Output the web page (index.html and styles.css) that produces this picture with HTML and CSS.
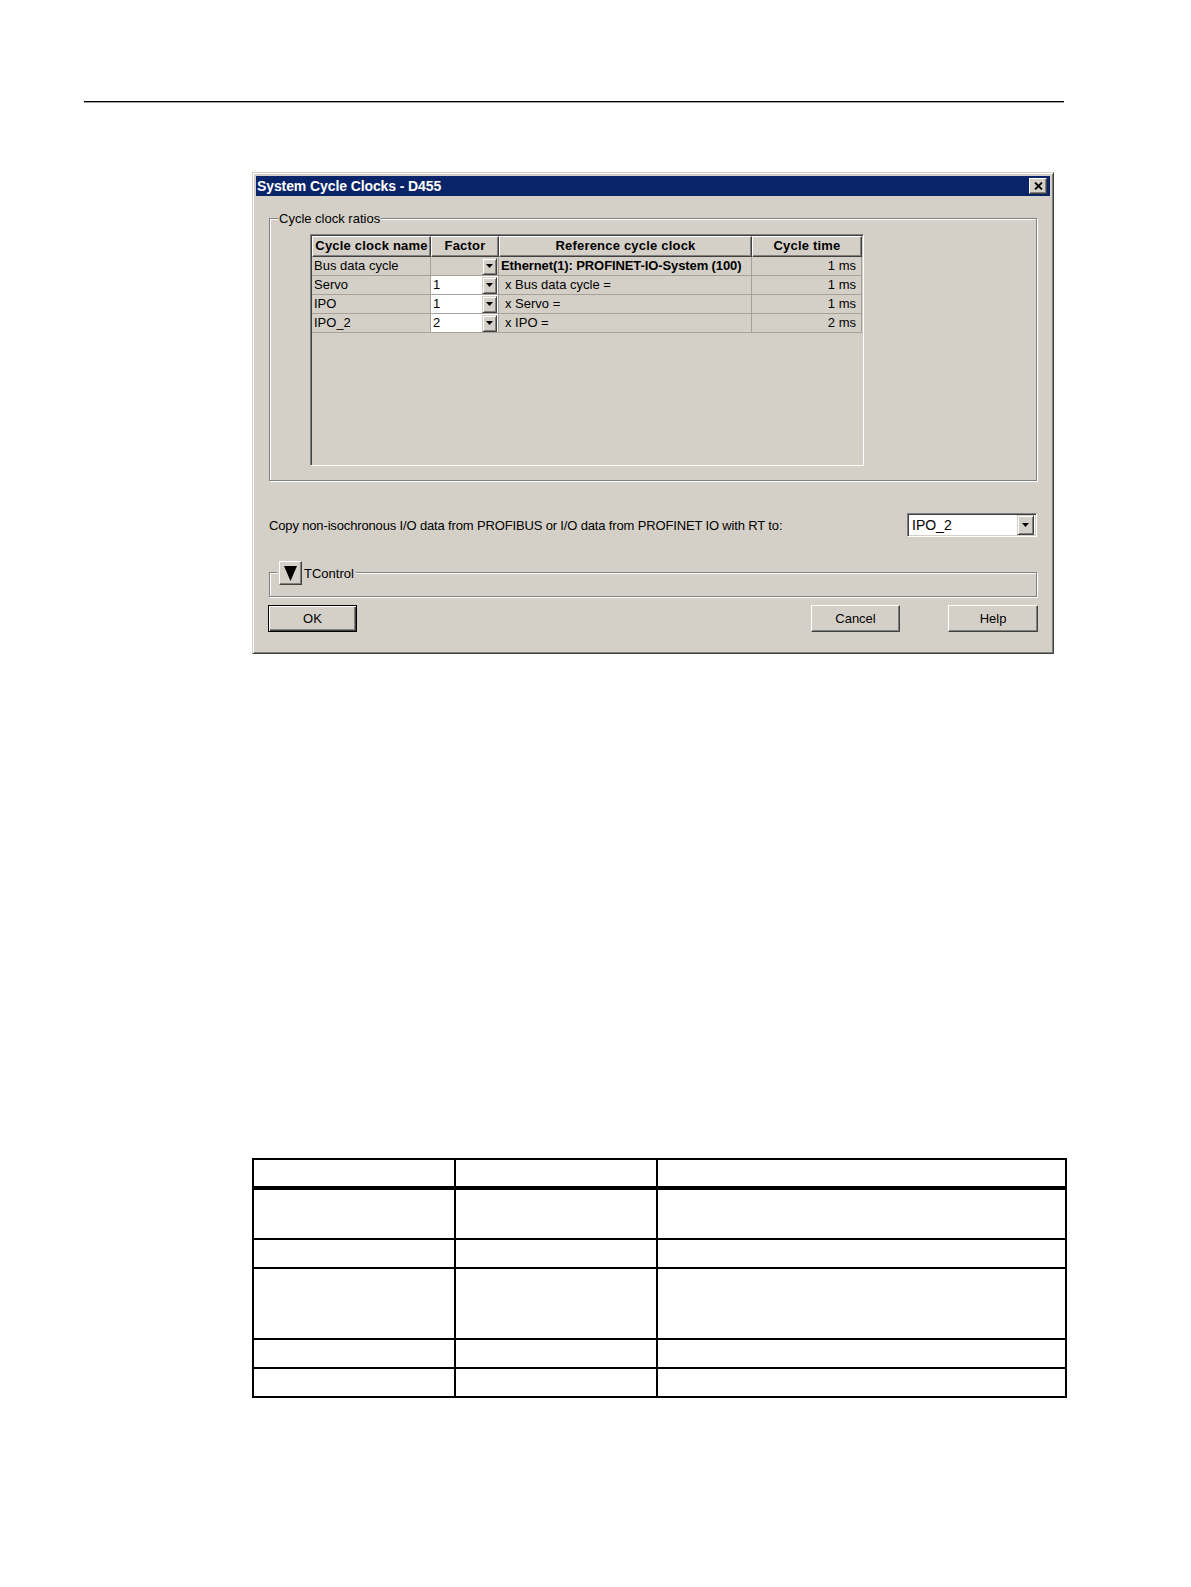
FILE: index.html
```html
<!DOCTYPE html>
<html>
<head>
<meta charset="utf-8">
<title>System Cycle Clocks - D455</title>
<link rel="stylesheet" href="styles.css">
</head>
<body>
<div class="page">
  <div class="rule"></div>

  <div class="dialog">
    <div class="titlebar">
      <span class="title">System Cycle Clocks - D455</span>
      <span class="close">
        <svg width="9" height="8" viewBox="0 0 9 8"><path d="M1 0.5 L8 7.5 M8 0.5 L1 7.5" stroke="#000" stroke-width="1.8" fill="none"/></svg>
      </span>
    </div>

    <div class="dlgbody">
      <div class="group ratios">
        <div class="legend">Cycle clock ratios</div>
        <div class="grid">
          <div class="cells">
            <div class="hd">Cycle clock name</div>
            <div class="hd">Factor</div>
            <div class="hd">Reference cycle clock</div>
            <div class="hd">Cycle time</div>

            <div class="cell">Bus data cycle</div>
            <div class="cell factor gray"><span class="fv"></span><span class="ddbtn"><svg width="7" height="4" viewBox="0 0 7 4"><path d="M0 0H7L3.5 4Z" fill="#000"/></svg></span></div>
            <div class="cell bold">Ethernet(1): PROFINET-IO-System (100)</div>
            <div class="cell time">1 ms</div>

            <div class="cell">Servo</div>
            <div class="cell factor"><span class="fv">1</span><span class="ddbtn"><svg width="7" height="4" viewBox="0 0 7 4"><path d="M0 0H7L3.5 4Z" fill="#000"/></svg></span></div>
            <div class="cell ref">x Bus data cycle =</div>
            <div class="cell time">1 ms</div>

            <div class="cell">IPO</div>
            <div class="cell factor"><span class="fv">1</span><span class="ddbtn"><svg width="7" height="4" viewBox="0 0 7 4"><path d="M0 0H7L3.5 4Z" fill="#000"/></svg></span></div>
            <div class="cell ref">x Servo =</div>
            <div class="cell time">1 ms</div>

            <div class="cell">IPO_2</div>
            <div class="cell factor"><span class="fv">2</span><span class="ddbtn"><svg width="7" height="4" viewBox="0 0 7 4"><path d="M0 0H7L3.5 4Z" fill="#000"/></svg></span></div>
            <div class="cell ref">x IPO =</div>
            <div class="cell time">2 ms</div>
          </div>
        </div>
      </div>

      <div class="copyrow">
        <span class="copylabel">Copy non-isochronous I/O data from PROFIBUS or I/O data from PROFINET IO with RT to:</span>
        <div class="combo">
          <span class="comboval">IPO_2</span>
          <span class="ddbtn big"><svg width="7" height="4" viewBox="0 0 7 4"><path d="M0 0H7L3.5 4Z" fill="#000"/></svg></span>
        </div>
      </div>

      <div class="group tcontrol">
        <div class="legend tlegend">
          <span class="toggle"><svg width="13" height="15" viewBox="0 0 13 15"><path d="M0 0H13L6.5 15Z" fill="#000"/></svg></span>
          <span>TControl</span>
        </div>
      </div>

      <div class="buttons">
        <button class="btn default">OK</button>
        <div class="rightbtns">
          <button class="btn">Cancel</button>
          <button class="btn help">Help</button>
        </div>
      </div>
    </div>
  </div>

  <table class="doc">
    <colgroup><col class="c1"><col class="c2"><col class="c3"></colgroup>
    <thead>
      <tr class="h29"><th></th><th></th><th></th></tr>
    </thead>
    <tbody>
      <tr class="h51"><td></td><td></td><td></td></tr>
      <tr class="h29"><td></td><td></td><td></td></tr>
      <tr class="h71"><td></td><td></td><td></td></tr>
      <tr class="h29"><td></td><td></td><td></td></tr>
      <tr class="h29"><td></td><td></td><td></td></tr>
    </tbody>
  </table>
</div>
</body>
</html>
```

FILE: styles.css
```css
html, body {
  margin: 0;
  padding: 0;
  background: #ffffff;
}

.page {
  padding-top: 101px;
  font-family: "Liberation Sans", Arial, sans-serif;
  color: #000;
}

.rule {
  margin-left: 84px;
  width: 980px;
  height: 1px;
  background: #000;
  box-shadow: 0 0.5px 0 #444;
}

/* ---------- dialog ---------- */
.dialog {
  box-sizing: border-box;
  margin: 70px 0 0 252px;
  width: 802px;
  height: 482px;
  background: #d4d0c8;
  border: 1px solid;
  border-color: #d4d0c8 #404040 #404040 #d4d0c8;
  box-shadow: inset 1px 1px 0 #ffffff, inset -1px -1px 0 #808080;
  padding: 3px;
}

.titlebar {
  height: 20px;
  background: #0a246a;
  display: flex;
  align-items: center;
  justify-content: space-between;
  padding: 0 3px 0 1px;
}

.title {
  color: #fff;
  font-weight: bold;
  font-size: 14px;
  line-height: 20px;
  letter-spacing: -0.1px;
}

.close {
  box-sizing: border-box;
  width: 18px;
  height: 16px;
  background: #d4d0c8;
  border: 1px solid;
  border-color: #ffffff #404040 #404040 #ffffff;
  box-shadow: inset -1px -1px 0 #808080;
  display: flex;
  align-items: center;
  justify-content: center;
}

.dlgbody {
  padding: 0 13px;
  font-size: 13px;
}

.group {
  box-sizing: border-box;
  border: 1px solid #808080;
  box-shadow: inset 1px 1px 0 #ffffff, 1px 1px 0 #ffffff;
}

.ratios {
  margin-top: 22px;
  height: 263px;
}

.legend {
  width: fit-content;
  margin: -8px 0 0 8px;
  padding: 0 1px;
  background: #d4d0c8;
  line-height: 15px;
  font-size: 13px;
}

/* ---------- grid ---------- */
.grid {
  box-sizing: border-box;
  margin: 8px 0 0 40px;
  width: 554px;
  height: 232px;
  border: 1px solid;
  border-color: #808080 #ffffff #ffffff #808080;
  box-shadow: inset 1px 1px 0 #404040, inset -1px -1px 0 #d4d0c8;
  padding: 1px;
}

.cells {
  display: grid;
  grid-template-columns: 119px 68px 253px 110px;
  grid-template-rows: 21px repeat(4, 19px);
}

.hd {
  box-sizing: border-box;
  border: 1px solid;
  border-color: #ffffff #404040 #404040 #ffffff;
  box-shadow: inset -1px -1px 0 #808080;
  font-weight: bold;
  font-size: 13px;
  letter-spacing: 0.2px;
  line-height: 18px;
  text-align: center;
  white-space: nowrap;
  overflow: hidden;
}

.cell {
  box-sizing: border-box;
  border-right: 1px solid #a6a29a;
  border-bottom: 1px solid #a6a29a;
  padding-left: 2px;
  line-height: 18px;
  font-size: 13px;
  white-space: nowrap;
  overflow: hidden;
}

.cell.bold {
  font-weight: bold;
  letter-spacing: -0.1px;
}

.cell.ref {
  padding-left: 6px;
}

.cell.time {
  text-align: right;
  padding-right: 5px;
}

.factor {
  display: flex;
  align-items: center;
  background: #ffffff;
  padding: 0 1px 0 2px;
}

.factor.gray {
  background: #d4d0c8;
}

.fv {
  flex: 1;
}

.ddbtn {
  box-sizing: border-box;
  width: 15px;
  height: 17px;
  background: #d4d0c8;
  border: 1px solid;
  border-color: #d4d0c8 #404040 #404040 #d4d0c8;
  box-shadow: inset 1px 1px 0 #ffffff, inset -1px -1px 0 #808080;
  display: flex;
  align-items: center;
  justify-content: center;
}

.ddbtn.big {
  width: 17px;
  height: 20px;
}

/* ---------- copy row ---------- */
.copyrow {
  margin-top: 32px;
  display: flex;
  align-items: center;
  justify-content: space-between;
}

.copylabel {
  font-size: 13px;
  letter-spacing: -0.15px;
}

.combo {
  box-sizing: border-box;
  width: 130px;
  height: 24px;
  background: #ffffff;
  border: 1px solid;
  border-color: #808080 #ffffff #ffffff #808080;
  box-shadow: inset 1px 1px 0 #404040, inset -1px -1px 0 #d4d0c8;
  padding: 1px 2px 1px 1px;
  display: flex;
  align-items: center;
}

.comboval {
  flex: 1;
  padding-left: 3px;
  font-size: 14px;
}

/* ---------- TControl ---------- */
.tcontrol {
  margin-top: 35px;
  height: 25px;
}

.tlegend {
  margin: -12px 0 0 7px;
  padding: 0 2px;
  display: flex;
  align-items: center;
  gap: 2px;
}

.toggle {
  box-sizing: border-box;
  width: 23px;
  height: 24px;
  background: #d4d0c8;
  border: 1px solid;
  border-color: #ffffff #404040 #404040 #ffffff;
  box-shadow: inset -1px -1px 0 #808080;
  display: flex;
  align-items: center;
  justify-content: center;
}

/* ---------- buttons ---------- */
.buttons {
  margin-top: 8px;
  display: flex;
  justify-content: space-between;
}

.rightbtns {
  display: flex;
  gap: 48px;
  margin-right: -1px;
}

.btn {
  box-sizing: border-box;
  width: 89px;
  height: 27px;
  background: #d4d0c8;
  border: 1px solid;
  border-color: #ffffff #404040 #404040 #ffffff;
  box-shadow: inset -1px -1px 0 #808080;
  font-family: "Liberation Sans", Arial, sans-serif;
  font-size: 13px;
  color: #000;
  padding: 0;
}

.btn.help {
  width: 90px;
}

.btn.default {
  margin-left: -1px;
  border: 1px solid #000;
  box-shadow: inset 1px 1px 0 #ffffff, inset -1px -1px 0 #404040, inset -2px -2px 0 #808080;
}

/* ---------- document table ---------- */
.doc {
  margin: 504px 0 0 252px;
  width: 813px;
  border-collapse: collapse;
  table-layout: fixed;
}

.doc .c1 { width: 202px; }
.doc .c2 { width: 202px; }
.doc .c3 { width: 409px; }

.doc th,
.doc td {
  border: 2px solid #000;
  padding: 0;
}

.doc thead th {
  border-bottom: 4px solid #000;
}

.doc .h29 { height: 29px; }
.doc .h51 { height: 51px; }
.doc .h71 { height: 71px; }
```
